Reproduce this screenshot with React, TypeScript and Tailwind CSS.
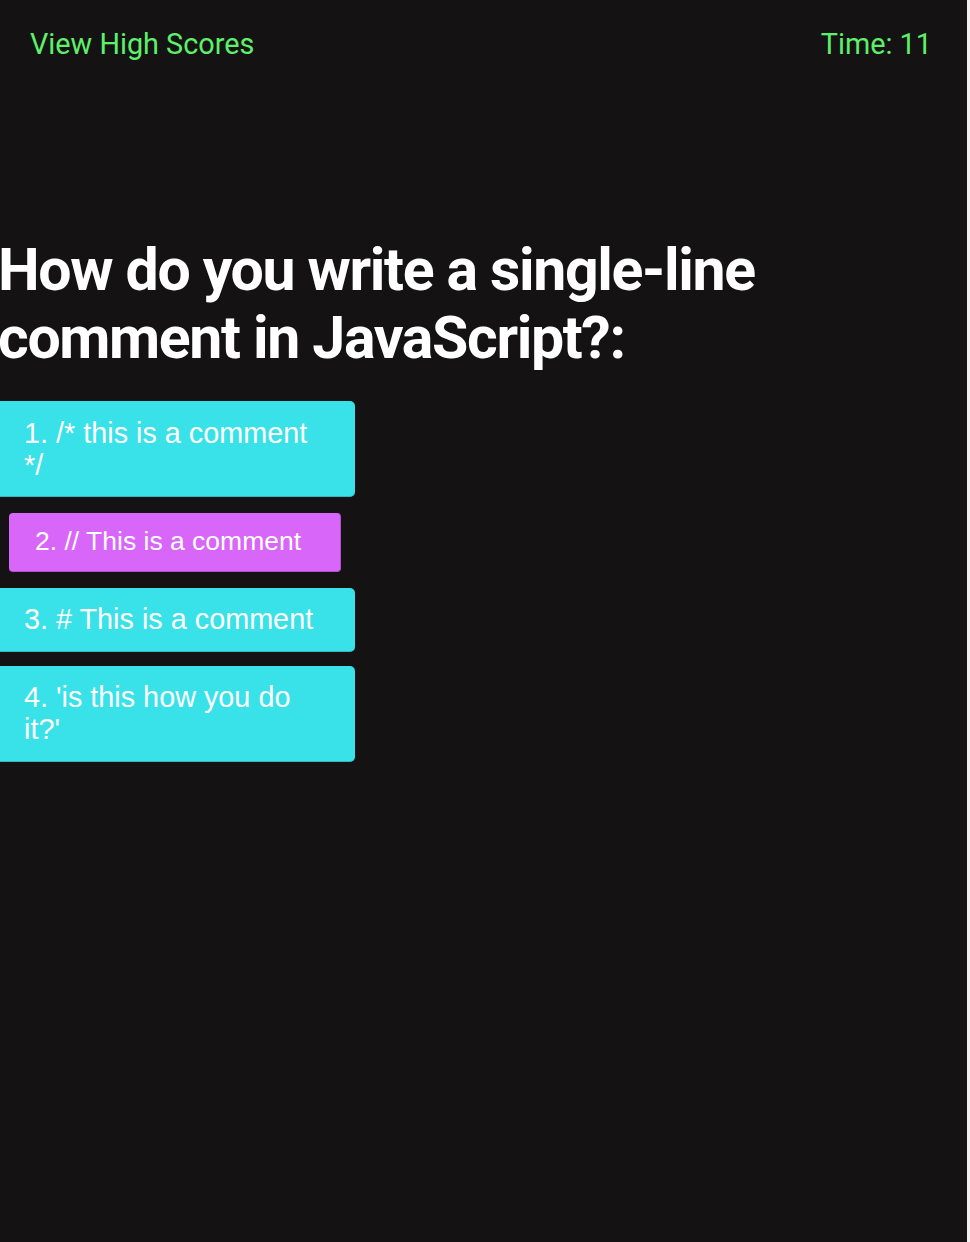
import React from 'react';

interface Choice {
    label: string;
    active?: boolean;
}

const choices: Choice[] = [
    { label: '1. /* this is a comment */' },
    { label: '2. // This is a comment', active: true },
    { label: '3. # This is a comment' },
    { label: "4. 'is this how you do it?'" },
];

// the hovered answer is drawn a little smaller than the others
const ChoiceButton: React.FC<{ choice: Choice }> = ({ choice }) => {
    if (choice.active) {
        return (
            <button className="ml-[9px] w-[332px] whitespace-nowrap rounded-[4px] border-r border-b border-[#b04fd0] bg-[#d766f9] py-[14px] pl-[26px] pr-[10px] text-left text-[26.5px] leading-[29.5px] text-white">
                {choice.label}
            </button>
        );
    }
    return (
        <button className="w-[355px] rounded-r-[5px] border-b border-[#2cb9c1] bg-[#39e1e9] py-[15.5px] pl-[24px] pr-[24px] text-left text-[28.8px] leading-[32px] text-white">
            {choice.label}
        </button>
    );
};

export default function App() {
    return (
        <div className="flex min-h-[1242px] w-full bg-[#f0f0f0]">
            <div className="flex w-[967px] flex-col bg-[#141213]" style={{ fontFamily: '"Liberation Sans", Arial, sans-serif' }}>
                <header className="flex items-center justify-between pl-[30px] pr-[35px] pt-[24px] text-[28.8px] leading-[40px] text-[#5ef06a]" style={{ fontFamily: 'Roboto, sans-serif' }}>
                    <span>View High Scores</span>
                    <span>Time: 11</span>
                </header>

                <main className="flex flex-col">
                    <h1 className="-ml-[2px] mt-[172px] text-[59px] font-bold leading-[68px] tracking-[-1.35px] text-white" style={{ fontFamily: 'Roboto, sans-serif' }}>
                        How do you write a single-line comment in JavaScript?:
                    </h1>
                    <div className="mt-[29px] flex flex-col items-start">
                        <div className="mb-[16px]"><ChoiceButton choice={choices[0]} /></div>
                        <div className="mb-[16px]"><ChoiceButton choice={choices[1]} /></div>
                        <div className="mb-[14px]"><ChoiceButton choice={choices[2]} /></div>
                        <div><ChoiceButton choice={choices[3]} /></div>
                    </div>
                </main>
            </div>
        </div>
    );
}
